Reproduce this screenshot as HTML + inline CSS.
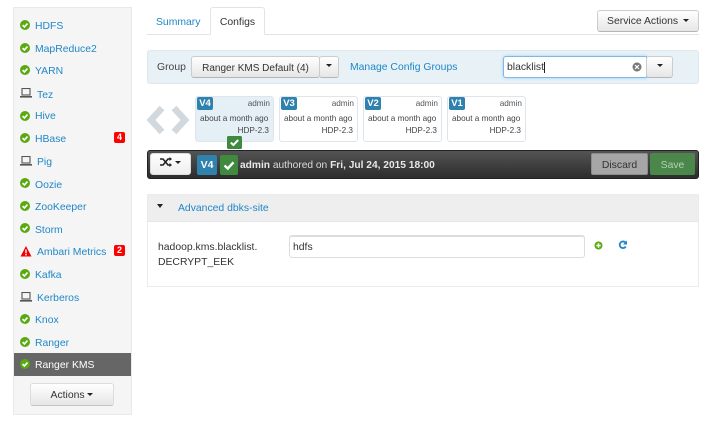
<!DOCTYPE html>
<html><head><meta charset="utf-8">
<style>
html,body{margin:0;padding:0;background:#fff}
body{width:720px;height:428px;overflow:hidden;position:relative;font-family:"Liberation Sans",sans-serif;font-size:10.4px;color:#333}
.a{position:absolute;white-space:nowrap}
.l{color:#1f87c8}
.btn{position:absolute;box-sizing:border-box;border:1px solid #ccc;border-bottom-color:#b5b5b5;border-radius:3px;background:linear-gradient(#fff,#e6e6e6);text-align:center;color:#333;white-space:nowrap}
.car{display:inline-block;width:0;height:0;border-left:3px solid transparent;border-right:3px solid transparent;border-top:3px solid #222;vertical-align:2px}
.it{position:absolute;left:35px;margin-top:2px;color:#1f87c8;line-height:14px;white-space:nowrap}
.ok{position:absolute;left:20px;width:10px;height:10px}
.lap{position:absolute;left:20px;width:12px;height:10px}
.bd{position:absolute;left:114px;width:11px;height:11px;background:#f00;border-radius:2px;color:#fff;font-weight:bold;font-size:9px;line-height:11px;text-align:center}
.v{position:absolute;top:96px;width:79px;height:46px;box-sizing:border-box;border:1px solid #dfe5ea;border-radius:3px;background:#fff;font-size:8.2px;color:#444}
.v .t{position:absolute;left:1px;top:0;width:16px;height:13px;background:#2f81ae;color:#fff;font-weight:bold;font-size:9.5px;line-height:13px;text-align:center;border-radius:2px}
.v .u{position:absolute;right:3px;top:1px;line-height:11px;color:#555;white-space:nowrap}
.v .m{position:absolute;left:4px;top:16px;line-height:11px;white-space:nowrap}
.v .h{position:absolute;right:4px;top:28px;line-height:11px;white-space:nowrap}
</style></head><body>
<svg width="0" height="0" style="position:absolute"><defs>
<g id="ok"><circle cx="5" cy="5" r="5" fill="#5aa90f"/><path d="M2.600 5.100 4.400 6.900 7.500 3.600" fill="none" stroke="#fff" stroke-width="1.700"/></g>
<g id="lap"><rect x="2" y="0.500" width="8" height="6.500" fill="none" stroke="#555" stroke-width="1.100"/><rect x="0" y="8" width="12" height="1.600" fill="#555"/></g>
</defs></svg>

<div class="a" style="left:13px;top:7px;width:119px;height:408px;box-sizing:border-box;background:#f5f5f5;border:1px solid #e9e9e9"></div>
<div class="a" style="left:14px;top:353px;width:117px;height:23px;background:#666"></div>

<svg class="ok" style="top:20px"><use href="#ok"/></svg><div class="it" style="top:18px">HDFS</div>
<svg class="ok" style="top:43px"><use href="#ok"/></svg><div class="it" style="top:41px">MapReduce2</div>
<svg class="ok" style="top:65px"><use href="#ok"/></svg><div class="it" style="top:63px">YARN</div>
<svg class="lap" style="top:88px"><use href="#lap"/></svg><div class="it" style="top:87px;left:37px">Tez</div>
<svg class="ok" style="top:111px"><use href="#ok"/></svg><div class="it" style="top:108px">Hive</div>
<svg class="ok" style="top:133px"><use href="#ok"/></svg><div class="it" style="top:131px">HBase</div><div class="bd" style="top:132px">4</div>
<svg class="lap" style="top:156px"><use href="#lap"/></svg><div class="it" style="top:154px;left:37px">Pig</div>
<svg class="ok" style="top:178px"><use href="#ok"/></svg><div class="it" style="top:177px">Oozie</div>
<svg class="ok" style="top:201px"><use href="#ok"/></svg><div class="it" style="top:199px">ZooKeeper</div>
<svg class="ok" style="top:223px"><use href="#ok"/></svg><div class="it" style="top:222px">Storm</div>
<svg class="a" style="left:20px;top:246px" width="12" height="11"><path d="M6 0 11.500 10.500H.5Z" fill="#e00"/><rect x="5.300" y="3.500" width="1.400" height="3.800" fill="#fff"/><rect x="5.300" y="8" width="1.400" height="1.400" fill="#fff"/></svg><div class="it" style="top:244px;left:37px">Ambari Metrics</div><div class="bd" style="top:245px">2</div>
<svg class="ok" style="top:269px"><use href="#ok"/></svg><div class="it" style="top:267px">Kafka</div>
<svg class="lap" style="top:292px"><use href="#lap"/></svg><div class="it" style="top:290px;left:37px">Kerberos</div>
<svg class="ok" style="top:314px"><use href="#ok"/></svg><div class="it" style="top:312px">Knox</div>
<svg class="ok" style="top:337px"><use href="#ok"/></svg><div class="it" style="top:335px">Ranger</div>
<svg class="ok" style="top:359px"><use href="#ok"/></svg><div class="it" style="top:357px;color:#fff">Ranger KMS</div>
<div class="btn" style="left:30px;top:383px;width:84px;height:23px;line-height:23px;border-color:#ddd;border-bottom-color:#c5c5c5">Actions <span class="car"></span></div>

<!-- tabs -->
<div class="a" style="left:147px;top:34px;width:552px;height:1px;background:#e3e3e3"></div>
<div class="a l" style="left:156px;top:16px;line-height:14px">Summary</div>
<div class="a" style="left:210px;top:7px;width:55px;height:28px;box-sizing:border-box;border:1px solid #e3e3e3;border-bottom:1px solid #fff;border-radius:3px 3px 0 0;background:#fff;text-align:center;line-height:30px">Configs</div>
<div class="btn" style="left:597px;top:10px;width:102px;height:22px;line-height:22px;">Service Actions <span class="car" style="margin-left:2px"></span></div>

<!-- group bar -->
<div class="a" style="left:147px;top:50px;width:552px;height:34px;box-sizing:border-box;background:#e8f1f6;border:1px solid #dde7ed;border-radius:3px"></div>
<div class="a" style="left:157px;top:61px;line-height:14px;color:#444">Group</div>
<div class="btn" style="left:191px;top:56px;width:129px;height:22px;line-height:23px;font-size:10px">Ranger KMS Default (4)</div>
<div class="btn" style="left:319px;top:56px;width:20px;height:22px;line-height:20px"><span class="car"></span></div>
<div class="a l" style="left:350px;top:61px;line-height:14px">Manage Config Groups</div>
<div class="a" style="left:503px;top:56px;width:144px;height:22px;box-sizing:border-box;background:#fff;border:1px solid #7db9e8;border-radius:3px 0 0 3px;box-shadow:0 0 3px #9cd0f5;padding-left:3px;line-height:22px">blacklist<span style="border-left:1px solid #222;margin-left:0"></span></div>
<svg class="a" style="left:632px;top:62px" width="10" height="10"><circle cx="5" cy="5" r="4.500" fill="#777"/><path d="M3 3 7 7M7 3 3 7" stroke="#fff" stroke-width="1.200"/></svg>
<div class="btn" style="left:646px;top:56px;width:27px;height:22px;line-height:20px"><span class="car"></span></div>

<!-- arrows -->
<svg class="a" style="left:146px;top:105px" width="44" height="30"><path d="M16 3 5 15 16 27" fill="none" stroke="#d1d9de" stroke-width="6.500"/><path d="M28 3 39 15 28 27" fill="none" stroke="#d1d9de" stroke-width="6.500"/></svg>

<!-- versions -->
<div class="v" style="left:195px;background:#e5f0f6"><div class="t">V4</div><div class="u">admin</div><div class="m">about a month ago</div><div class="h">HDP-2.3</div></div>
<div class="v" style="left:279px"><div class="t">V3</div><div class="u">admin</div><div class="m">about a month ago</div><div class="h">HDP-2.3</div></div>
<div class="v" style="left:363px"><div class="t">V2</div><div class="u">admin</div><div class="m">about a month ago</div><div class="h">HDP-2.3</div></div>
<div class="v" style="left:447px"><div class="t">V1</div><div class="u">admin</div><div class="m">about a month ago</div><div class="h">HDP-2.3</div></div>
<svg class="a" style="left:227px;top:136px" width="15" height="13"><rect width="15" height="13" rx="1.500" fill="#3f8a3f"/><path d="M3.800 6.600 6.400 9 11.200 4" fill="none" stroke="#fff" stroke-width="2"/></svg>

<!-- dark bar -->
<div class="a" style="left:147px;top:150px;width:552px;height:29px;box-sizing:border-box;background:linear-gradient(#545454,#2c2c2c);border:1px solid #222;border-radius:3px"></div>
<div class="btn" style="left:150px;top:153px;width:41px;height:22px;line-height:20px;border-color:#ddd;background:linear-gradient(#fff,#eee)">
<svg width="12" height="10" style="vertical-align:-1px"><path d="M0 2H3L8 8H10M0 8H3L8 2H10" fill="none" stroke="#222" stroke-width="1.600"/><path d="M9.500 0 12 2 9.500 4ZM9.500 6 12 8 9.500 10Z" fill="#222"/></svg> <span class="car"></span></div>
<div class="a" style="left:197px;top:155px;width:20px;height:20px;background:#2f81ae;border-radius:2px;color:#fff;font-weight:bold;font-size:10.500px;line-height:21px;text-align:center">V4</div>
<svg class="a" style="left:220px;top:155px" width="18" height="20"><rect width="18" height="20" rx="2" fill="#3f8a3f"/><path d="M4.500 10.500 7.800 13.500 13.500 7.300" fill="none" stroke="#fff" stroke-width="2.400"/></svg>
<div class="a" style="left:240px;top:159px;line-height:14px;color:#ddd;font-size:10.200px"><b style="color:#e8e8e8">admin</b> authored on <b style="color:#e8e8e8">Fri, Jul 24, 2015 18:00</b></div>
<div class="a" style="left:591px;top:153px;width:57px;height:22px;background:#a6a6a6;border:1px solid #8c8c8c;box-sizing:border-box;border-radius:2px;text-align:center;line-height:23px;color:#333">Discard</div>
<div class="a" style="left:650px;top:153px;width:45px;height:22px;background:#4b874b;border-radius:2px;text-align:center;line-height:25px;color:#b4d2b4">Save</div>

<!-- panel -->
<div class="a" style="left:147px;top:194px;width:552px;height:93px;box-sizing:border-box;border:1px solid #ebebeb;background:#fff"></div>
<div class="a" style="left:148px;top:195px;width:550px;height:26px;background:#eee;border-bottom:1px solid #e6e6e6"></div>
<div class="a" style="left:157px;top:204px;width:0;height:0;border-left:3.500px solid transparent;border-right:3.500px solid transparent;border-top:4px solid #222"></div>
<div class="a l" style="left:178px;top:202px;line-height:14px">Advanced dbks-site</div>
<div class="a" style="left:158px;top:240px;line-height:15px;color:#333">hadoop.kms.blacklist.<br>DECRYPT_EEK</div>
<div class="a" style="left:289px;top:235px;width:296px;height:23px;box-sizing:border-box;border:1px solid #ddd;border-top-width:2px;border-radius:3px;padding-left:3px;line-height:21px;background:#fff">hdfs</div>
<svg class="a" style="left:594px;top:241px" width="9" height="9"><circle cx="4.500" cy="4.500" r="4" fill="#5aa90f"/><path d="M2.300 4.500H6.700M4.500 2.300V6.700" stroke="#fff" stroke-width="1.400"/></svg>
<svg class="a" style="left:618px;top:240px" width="10" height="10"><path d="M7.500 2.600A3.300 3.300 0 1 0 7.800 6.500" fill="none" stroke="#1f87c8" stroke-width="1.800"/><path d="M9 0.500V4.500H5Z" fill="#1f87c8"/></svg>
</body></html>
